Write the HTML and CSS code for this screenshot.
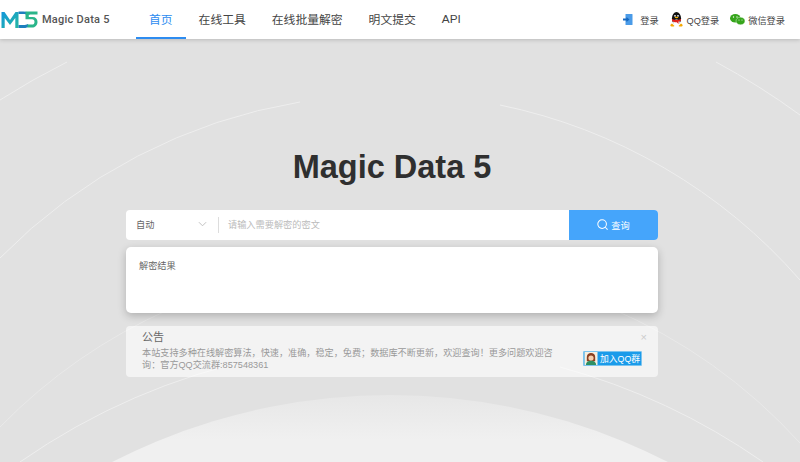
FILE: index.html
```html
<!DOCTYPE html>
<html lang="zh">
<head>
<meta charset="utf-8">
<title>Magic Data 5</title>
<link rel="stylesheet" href="styles.css">
</head>
<body>
<svg class="bg-art" viewBox="0 0 800 462" aria-hidden="true">
  <defs>
    <linearGradient id="bubbleFill" gradientUnits="userSpaceOnUse" x1="0" y1="395" x2="0" y2="440">
      <stop offset="0" stop-color="#e7e7e7"/>
      <stop offset="1" stop-color="#f0f0f0"/>
    </linearGradient>
  </defs>
  <circle class="bubble" cx="390" cy="1005" r="610"/>
  <path class="arc" d="M0 100 A724 724 0 0 1 67 62"/>
  <path class="arc" d="M716 62 A724 724 0 0 1 800 115"/>
  <path class="arc" d="M0 258 A545 545 0 0 1 300 102"/>
  <path class="arc" d="M500 105 A545 545 0 0 1 800 280"/>
  <path class="arc faint" d="M0 427 A547 547 0 0 1 170 309"/>
  <path class="arc faint" d="M610 308 A547 547 0 0 1 800 443"/>
  <path class="arc" d="M20 462 A660 660 0 0 1 260 358"/>
  <path class="arc" d="M560 367 A660 660 0 0 1 763 462"/>
</svg>
<header class="topbar">
  <a class="brand">
    <svg class="logo" viewBox="0 0 37 17" aria-hidden="true">
      <defs>
        <linearGradient id="logoBlue" x1="0" y1="0" x2="1" y2="1">
          <stop offset="0" stop-color="#1296db"/>
          <stop offset="1" stop-color="#26b8a0"/>
        </linearGradient>
      </defs>
      <path d="M0.500 17V1h3l5.500 8 5.500-8h3v16h-3.200V7L9 14 3.700 7v10z" fill="url(#logoBlue)"/>
      <path d="M17.500 0.500h5c3.500 0 5.500 1 6.500 2.500v.5h-4c-.8-.4-1.700-.5-3-.5h-4.500zM17.500 14h5c1.800 0 3-.3 4-1l2 2c-1.500 1.400-3.300 2-6 2h-5z" fill="#1d7fbe"/>
      <path d="M24.500 0.500h12v3h-8.700v2.400h3.700c3.300 0 5 2 5 5s-2.200 5.600-5.500 5.600h-4.500v-3h4.500c1.600 0 2.500-1 2.500-2.600s-.9-2.600-2.500-2.600h-6.500z" fill="#2ab58a"/>
    </svg>
    <span class="brand-name">Magic Data 5</span>
  </a>
  <nav class="nav">
    <a class="nav-item active">首页</a>
    <a class="nav-item">在线工具</a>
    <a class="nav-item">在线批量解密</a>
    <a class="nav-item">明文提交</a>
    <a class="nav-item">API</a>
  </nav>
  <div class="logins">
    <a class="login">
      <svg class="ico" viewBox="0 0 10 11" aria-hidden="true"><rect x="2.500" y="0" width="7" height="11" rx=".6" fill="#4a9be8"/><path d="M0 4.500h3.500V3l3 2.500-3 2.500V6.500H0z" fill="#1668c0"/></svg>
      <span>登录</span>
    </a>
    <a class="login qq">
      <svg class="ico-qq" viewBox="0 0 13 15" aria-hidden="true">
        <ellipse cx="6.500" cy="6.500" rx="4.600" ry="6.500" fill="#111"/>
        <ellipse cx="6.500" cy="10.500" rx="3.300" ry="3" fill="#fff"/>
        <circle cx="5" cy="3.800" r=".9" fill="#fff"/>
        <circle cx="8" cy="3.800" r=".9" fill="#fff"/>
        <ellipse cx="6.500" cy="5.500" rx="1.800" ry=".8" fill="#f5b400"/>
        <path d="M2 7c2.800 1.200 6.200 1.200 9 0v1.800c-.8.500-1.600.7-2.500.8v2.400L6.800 10.200c-1.800.1-3.400-.2-4.800-1.200z" fill="#e0201c"/>
        <path d="M2 11.500c-1 .5-2 1.500-1.500 2.500 1 .7 3 .7 4 0z" fill="#f5a800"/>
        <path d="M11 11.500c1 .5 2 1.500 1.500 2.500-1 .7-3 .7-4 0z" fill="#f5a800"/>
      </svg>
      <span>QQ登录</span>
    </a>
    <a class="login wx">
      <svg class="ico-wx" viewBox="0 0 15 11" aria-hidden="true">
        <ellipse cx="5.300" cy="4.300" rx="5.300" ry="4.300" fill="#36a51c"/>
        <ellipse cx="10.500" cy="7" rx="4.500" ry="3.800" fill="#36a51c" stroke="#fff" stroke-width=".4"/>
        <circle cx="3.500" cy="3" r=".7" fill="#fff"/>
        <circle cx="7" cy="3" r=".7" fill="#fff"/>
        <circle cx="9" cy="6" r=".5" fill="#fff"/>
        <circle cx="12" cy="6" r=".5" fill="#fff"/>
      </svg>
      <span>微信登录</span>
    </a>
  </div>
</header>
<main class="main">
  <h1 class="title">Magic Data 5</h1>
  <form class="search">
    <div class="select">
      <span>自动</span>
      <svg class="chev" viewBox="0 0 10 6" aria-hidden="true"><path d="M1 1l4 4 4-4" fill="none" stroke="#bbb" stroke-width="1"/></svg>
    </div>
    <div class="field">请输入需要解密的密文</div>
    <div class="go">
      <svg class="lens" viewBox="0 0 14 14" aria-hidden="true"><circle cx="6.500" cy="6.500" r="5.500" fill="none" stroke="#fff" stroke-width="1.300"/><path d="M10.500 10.500l3 3" stroke="#fff" stroke-width="1.300"/></svg>
      <span>查询</span>
    </div>
  </form>
  <section class="result">解密结果</section>
  <section class="notice">
    <span class="close">×</span>
    <div class="notice-body">
      <h2 class="notice-title">公告</h2>
      <p class="notice-text">本站支持多种在线解密算法，快速，准确，稳定，免费；数据库不断更新，欢迎查询！更多问题欢迎咨询：官方QQ交流群:857548361</p>
    </div>
    <a class="qq-group">
      <svg class="qq-face" viewBox="0 0 14 14" aria-hidden="true"><rect width="14" height="14" fill="#f7efe0"/><path d="M2.500 10V5.500C2.500 2.500 4.500 1 7 1s4.500 1.500 4.500 4.500V10z" fill="#8a3f20"/><circle cx="7" cy="6.500" r="2.800" fill="#f5cfae"/><path d="M1.500 14c0-3 2.500-4.500 5.500-4.500s5.500 1.500 5.500 4.500z" fill="#2f8f63"/></svg>
      <span>加入QQ群</span>
    </a>
  </section>
</main>
</body>
</html>
```
FILE: styles.css
```css
* { box-sizing: border-box; }
html, body { height: 100%; }
body {
  margin: 0;
  height: 462px;
  overflow: hidden;
  position: relative;
  background: #e1e1e1;
  font-family: "Liberation Sans", "Noto Sans CJK SC", sans-serif;
  color: #333;
}
.bg-art { position: absolute; left: 0; top: 0; width: 800px; height: 462px; }
.bubble { fill: url(#bubbleFill); }
.arc { fill: none; stroke: #eeeeee; stroke-width: 1; }
.arc.faint { stroke: #e9e9e9; }

.topbar {
  position: relative;
  height: 39px;
  background: #fff;
  display: flex;
  align-items: center;
  box-shadow: 0 1px 4px rgba(0,0,0,.18);
}
.brand { display: flex; align-items: center; width: 136px; padding-left: 1px; flex: none; }
.logo { width: 37px; height: 17px; flex: none; }
.brand-name { margin-left: 4px; font-family: Roboto, "Liberation Sans", sans-serif; font-size: 11px; font-weight: 500; letter-spacing: .25px; color: #555; white-space: nowrap; }
.nav { display: flex; align-self: stretch; }
.nav-item {
  display: flex; align-items: center;
  padding: 0 13px;
  font-size: 11.800px;
  color: #444;
  border-bottom: 2px solid transparent;
  white-space: nowrap;
}
.nav-item.active { color: #2d8cf0; border-bottom-color: #2d8cf0; }
.logins { margin-left: auto; display: flex; align-items: center; padding-right: 15px; }
.login { display: flex; align-items: center; font-size: 9.200px; color: #444; white-space: nowrap; }
.ico { width: 10px; height: 11px; margin-right: 7px; }
.qq { margin-left: 11px; }
.ico-qq { width: 13px; height: 15px; margin-right: 4px; }
.wx { margin-left: 11px; }
.ico-wx { width: 15px; height: 11px; margin-right: 3px; }

.main { position: relative; width: 532px; padding-top: 106px; margin-left: 126px; }
.title { margin: 0; height: 65px; font-size: 32.500px; line-height: 44px; font-weight: 700; text-align: center; color: #2f2f2f; }
.search { display: flex; height: 30px; background: #fff; border-radius: 4px; overflow: hidden; }
.select { width: 93px; flex: none; display: flex; align-items: center; justify-content: space-between; padding: 0 12px 2px 10px; font-size: 9.200px; color: #666; position: relative; }
.select::after { content: ""; position: absolute; right: 0; top: 7px; bottom: 7px; width: 1px; background: #ddd; }
.chev { width: 9px; height: 6px; }
.field { flex: 1; display: flex; align-items: center; padding: 0 0 2px 9px; font-size: 9.200px; color: #bbb; }
.go { width: 89px; flex: none; background: #45a5fb; color: #fff; display: flex; align-items: center; justify-content: center; font-size: 9.200px; padding-bottom: 1px; }
.lens { width: 11px; height: 11px; margin-right: 3px; }
.result {
  margin-top: 7px; height: 66px; background: #fff; border-radius: 5px;
  padding: 11px 13px; font-size: 9.200px; color: #666;
  box-shadow: 0 3px 8px rgba(0,0,0,.22);
}
.notice {
  position: relative; margin-top: 13px; height: 51px; background: rgba(255,255,255,.6); border-radius: 4px;
  display: flex; align-items: flex-start; padding: 3px 16px 0 16px; justify-content: space-between;
}
.notice-body { width: 418px; }
.notice-title { margin: 0; font-size: 11px; line-height: 16px; font-weight: 400; color: #666; }
.notice-text { margin: 2px 0 0; font-size: 9.150px; line-height: 12px; color: #999; }
.close { position: absolute; right: 11px; top: 5px; font-size: 11px; color: #ccc; line-height: 12px; }
.qq-group { display: flex; align-items: center; height: 15px; width: 59px; background: #1a9bea; margin-top: 22px; color: #fff; font-size: 8.800px; white-space: nowrap; border: 1px solid #7cc4ee; border-radius: 1px; }
.qq-face { width: 14px; height: 13px; margin-right: 2px; flex: none; }
```
